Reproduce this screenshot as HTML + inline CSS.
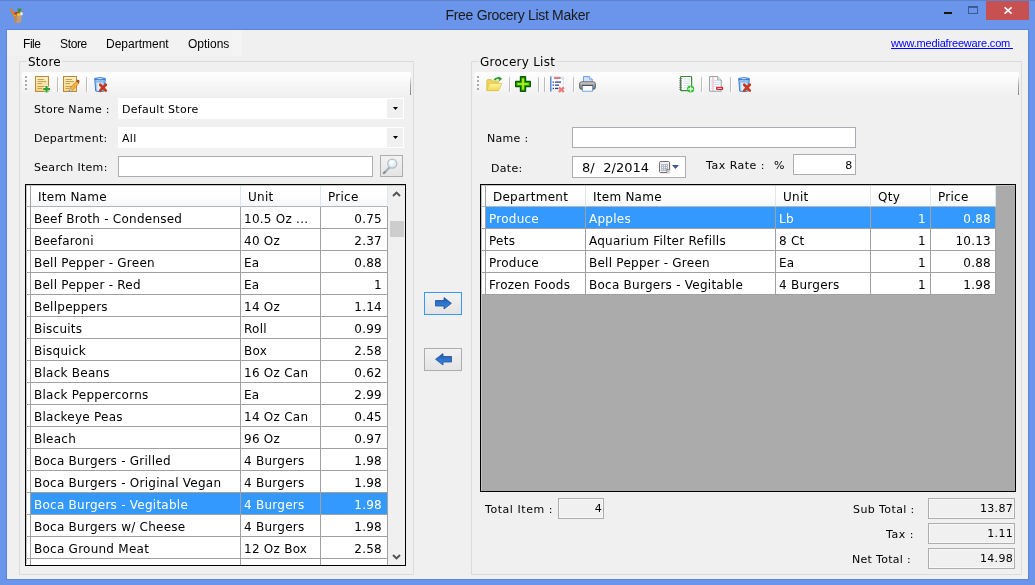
<!DOCTYPE html>
<html>
<head>
<meta charset="utf-8">
<title>Free Grocery List Maker</title>
<style>
html,body{margin:0;padding:0;}
body{width:1035px;height:585px;overflow:hidden;background:#6A95EB;position:relative;will-change:transform;
  font-family:"DejaVu Sans","Liberation Sans",sans-serif;font-size:11px;color:#000;}
div,span,svg,a{position:absolute;box-sizing:border-box;}
.v11{font-family:"DejaVu Sans","Liberation Sans",sans-serif;font-size:11px;letter-spacing:0.3px;white-space:pre;line-height:16px;}
.v12{font-family:"DejaVu Sans","Liberation Sans",sans-serif;font-size:12px;letter-spacing:0.25px;white-space:pre;line-height:15px;}
.seg{font-family:"Liberation Sans",sans-serif;white-space:pre;}
.row{left:0;height:22px;}
.cell{top:0;height:22px;line-height:25px;border-right:1px solid #A0A0A0;border-bottom:1px solid #A0A0A0;padding-left:3px;overflow:hidden;background:#fff;
  font-family:"DejaVu Sans","Liberation Sans",sans-serif;font-size:12px;letter-spacing:0.25px;white-space:pre;}
.cell.r{text-align:right;padding-right:5px;padding-left:0;}
.rg .cell.r{padding-right:4px;}
.sel .cell{background:#3399FF;color:#fff;}
.hdr .cell{background:linear-gradient(#FFFFFF 45%,#F6F7F9);border-right:1px solid #DCE6F2;border-bottom:1px solid #A0A0A0;padding-left:7px;height:22px;line-height:25px;border-bottom-color:#B0B6BC;}
.tb{background:linear-gradient(#FFFFFF,#FAFAFA 35%,#F4F4F4 70%,#F0F0F0);border-radius:3px 2px 0 0;}
.ro{background:#F0F0F0;border:1px solid #ADADAD;text-align:right;padding-right:1px;box-shadow:inset 0 0 0 1px #F8F8F8;}
.inp{background:#fff;border:1px solid #ABADB3;}
.grp{border:1px solid #DCDCDC;}
.glab{background:#F0F0F0;padding:0 1px;}
.sep{width:1px;background:#BDBDBD;}
.sep2{width:1px;background:#fff;}
</style>
</head>
<body>
<svg style="left:0;top:0" width="0" height="0"><defs><linearGradient id="gdoc" x1="0" y1="0" x2="0" y2="1"><stop offset="0" stop-color="#FEF3C8"/><stop offset="1" stop-color="#F3D382"/></linearGradient><linearGradient id="gglass" x1="0" y1="0" x2="1" y2="0"><stop offset="0" stop-color="#5C9CE4"/><stop offset="0.3" stop-color="#E4F2FF"/><stop offset="0.7" stop-color="#CFE6FB"/><stop offset="1" stop-color="#4A8CDC"/></linearGradient><linearGradient id="garr" x1="0" y1="0" x2="0" y2="1"><stop offset="0" stop-color="#1A56A8"/><stop offset="0.5" stop-color="#2F74CC"/><stop offset="1" stop-color="#3E86DC"/></linearGradient><linearGradient id="gfold" x1="0" y1="0" x2="0" y2="1"><stop offset="0" stop-color="#FFF6A0"/><stop offset="1" stop-color="#F0D84E"/></linearGradient><linearGradient id="gprn" x1="0" y1="0" x2="0" y2="1"><stop offset="0" stop-color="#D8D8D8"/><stop offset="0.5" stop-color="#9A9A9A"/><stop offset="1" stop-color="#6E6E6E"/></linearGradient><radialGradient id="glens" cx="0.4" cy="0.35" r="0.7"><stop offset="0" stop-color="#FFFFFF"/><stop offset="1" stop-color="#CFE6F6"/></radialGradient></defs></svg>
<div style="left:0;top:0;width:1035px;height:1px;background:#5C82CE"></div>
<svg style="left:10px;top:7.6px" width="14" height="16" viewBox="0 0 14 16"><path d="M3.6 7.6L12 7.2L11 14.6L4.6 15.2Z" fill="#C39C7A"/><path d="M4 8L7 8L6.5 15L4.6 15.2Z" fill="#B48A66"/><path d="M1 1.5L4.8 8" stroke="#E0801C" stroke-width="2.2" stroke-linecap="round"/><ellipse cx="6.6" cy="5.6" rx="2.3" ry="1.8" fill="#B8401E"/><path d="M7.6 0.6L12 0.8L10.5 3L9.6 5.4L8 4Z" fill="#3F8F28"/><path d="M10.4 4.4L12.6 3.6L12.6 7L10.2 7.4Z" fill="#F4F0E6"/><rect x="11.8" y="3" width="1.2" height="1.2" fill="#E0503A"/><ellipse cx="8.6" cy="6.6" rx="1.8" ry="1.4" fill="#F0CC28"/><ellipse cx="5" cy="7.4" rx="1.4" ry="0.9" fill="#F09A1E"/></svg>
<div class="seg" id="title" style="left:0;top:6px;width:1035px;text-align:center;font-size:14px;letter-spacing:-0.3px;color:#1a1a1a;line-height:18px;">Free Grocery List Maker</div>
<div style="left:944px;top:11.7px;width:8px;height:2.5px;background:#1A1410"></div>
<div style="left:968px;top:6px;width:10px;height:8px;border:1px solid #3D5A94;border-top-width:2px"></div>
<div style="left:986px;top:1px;width:43px;height:19px;background:#C75050"></div>
<svg style="left:1003px;top:6px" width="10" height="9" viewBox="0 0 10 9"><path d="M1.6 1.4L8.6 7.6M8.6 1.4L1.6 7.6" stroke="#fff" stroke-width="1.6" fill="none"/></svg>
<div id="client" style="left:7px;top:30px;width:1021px;height:549px;background:#F0F0F0;box-shadow:0 0 0 1px rgba(70,110,205,0.45)"></div>
<div style="left:7px;top:30px;width:235px;height:26px;background:#F2F2F2"></div>
<div style="left:232px;top:30px;width:10px;height:26px;background:#F4F4F4"></div>
<div class="seg" style="left:23px;top:37px;font-size:12px;line-height:15px;letter-spacing:-0.45px">File</div>
<div class="seg" style="left:60px;top:37px;font-size:12px;line-height:15px;letter-spacing:-0.35px">Store</div>
<div class="seg" style="left:106px;top:37px;font-size:12px;line-height:15px;letter-spacing:0px">Department</div>
<div class="seg" style="left:188px;top:37px;font-size:12px;line-height:15px;letter-spacing:0px">Options</div>
<a class="seg" style="left:891px;top:36px;font-size:11px;line-height:14px;letter-spacing:-0.18px;color:#0000FF;text-decoration:underline;">www.mediafreeware.com </a>
<div class="grp" style="left:19px;top:61px;width:395px;height:514px"></div>
<div class="glab v12" style="left:27px;top:55px;">Store</div>
<div class="tb" style="left:22px;top:72px;width:389px;height:24px"></div>
<div style="left:410px;top:76px;width:1px;height:19px;background:linear-gradient(rgba(150,150,150,0),#A8A8A8 45%,#868686)"></div>
<div style="left:25px;top:76px;width:2px;height:2px;background:#A8A8A8"></div><div style="left:26px;top:77px;width:1px;height:1px;background:#B0B0B0"></div><div style="left:25px;top:80px;width:2px;height:2px;background:#A8A8A8"></div><div style="left:26px;top:81px;width:1px;height:1px;background:#B0B0B0"></div><div style="left:25px;top:84px;width:2px;height:2px;background:#A8A8A8"></div><div style="left:26px;top:85px;width:1px;height:1px;background:#B0B0B0"></div><div style="left:25px;top:88px;width:2px;height:2px;background:#A8A8A8"></div><div style="left:26px;top:89px;width:1px;height:1px;background:#B0B0B0"></div>
<svg style="left:35px;top:76px" width="16" height="17" viewBox="0 0 16 17"><rect x="0.5" y="0.5" width="13" height="15" fill="url(#gdoc)" stroke="#B98A3E"/><path d="M2.5 3.5H9M2.5 5.5H11M2.5 7.5H7M2.5 10.5H11M2.5 12.5H7" stroke="#C9A050" stroke-width="1"/><path d="M11.5 9.5V16.5M8 13H15" stroke="#fff" stroke-width="3.6" opacity="0.9"/><path d="M11.5 10V16.5M8.2 13.2H15" stroke="#2EA22E" stroke-width="2.2"/></svg>
<div class="sep" style="left:57px;top:77px;height:15px"></div><div class="sep2" style="left:58px;top:77px;height:15px"></div>
<svg style="left:63px;top:76px" width="17" height="17" viewBox="0 0 17 17"><rect x="0.5" y="0.5" width="13" height="15" fill="url(#gdoc)" stroke="#B98A3E"/><path d="M2.5 3.5H9M2.5 5.5H11M2.5 7.5H7M2.5 10.5H11M2.5 12.5H6" stroke="#C9A050" stroke-width="1"/><path d="M13.2 5.2L15.8 7.4L9.4 14.6L6.6 12.6Z" fill="#F2B445" stroke="#C07818" stroke-width="0.6"/><path d="M13.2 5.2L14.4 3.8Q15.4 3.4 16.4 4.6Q16.8 5.8 15.8 7.4Z" fill="#A8521C"/><path d="M6.6 12.6L9.4 14.6L5.6 15.6Z" fill="#F2F2F2" stroke="#9A9A9A" stroke-width="0.5"/><path d="M5.6 15.6L6.4 14.2L7.4 15Z" fill="#3A3A3A"/></svg>
<div class="sep" style="left:86px;top:77px;height:15px"></div><div class="sep2" style="left:87px;top:77px;height:15px"></div>
<svg style="left:94px;top:77px" width="14" height="16" viewBox="0 0 14 16"><path d="M0.7 1.4Q6 -0.2 11.3 1.4L10.3 14Q6 15.4 1.7 14Z" fill="url(#gglass)" stroke="#3F7FD0" stroke-width="1"/><path d="M0.8 2.2Q6 3.6 11.2 2.2" stroke="#3F7FD0" stroke-width="1.3" fill="none"/><path d="M1.2 4.2Q6 5.6 10.8 4.2" stroke="#8CBCEC" stroke-width="1.6" fill="none"/><path d="M6.2 7.8L11.8 13.6M11.8 7.8L6.2 13.6" stroke="#C8381C" stroke-width="2.7" stroke-linecap="round"/></svg>
<div class="v11" style="left:34px;top:102px;">Store Name :</div>
<div class="v11" style="left:34px;top:131px;">Department:</div>
<div class="v11" style="left:34px;top:160px;">Search Item:</div>
<div style="left:118px;top:98px;width:286px;height:21px;background:#fff"></div>
<div style="left:387px;top:99px;width:16px;height:19px;background:#F0F0F0"></div>
<svg style="left:393px;top:107px" width="5" height="3" viewBox="0 0 5 3"><path d="M0 0H5L2.5 3Z" fill="#000"/></svg>
<div class="v11" style="left:122px;top:102px;">Default Store</div>
<div style="left:118px;top:127px;width:286px;height:21px;background:#fff"></div>
<div style="left:387px;top:128px;width:16px;height:19px;background:#F0F0F0"></div>
<svg style="left:393px;top:136px" width="5" height="3" viewBox="0 0 5 3"><path d="M0 0H5L2.5 3Z" fill="#000"/></svg>
<div class="v11" style="left:122px;top:131px;">All</div>
<div class="inp" style="left:118px;top:156px;width:255px;height:21px"></div>
<div style="left:380px;top:155px;width:23px;height:22px;background:linear-gradient(#F2F2F2,#E4E4E4);border:1px solid #ADADAD"></div>
<svg style="left:382px;top:157px" width="17" height="17" viewBox="0 0 17 17"><path d="M7.4 10.6L2 16" stroke="#A8B0BA" stroke-width="2.2" stroke-linecap="round"/><path d="M3 15.2L1.8 16.2" stroke="#8A94A0" stroke-width="2.2" stroke-linecap="round"/><circle cx="10.3" cy="6.6" r="4.5" fill="url(#glens)" stroke="#B4BCC6" stroke-width="1.3"/></svg>
<div style="left:25px;top:184px;width:381px;height:382px;background:#fff;border:1px solid #000;overflow:hidden">
<div class="row hdr" style="top:0px;width:379px;height:22px">
<div class="cell" style="left:1px;width:4px;padding:0;border-right-color:#A0A0A0"></div>
<div class="cell" style="left:5px;width:210px">Item Name</div>
<div class="cell" style="left:215px;width:80px">Unit</div>
<div class="cell" style="left:295px;width:67px">Price</div>
</div>
<div class="row" style="top:22px;width:379px">
<div class="cell" style="left:1px;width:4px;padding:0;background:#fff"></div>
<div class="cell" style="left:5px;width:210px">Beef Broth - Condensed</div>
<div class="cell" style="left:215px;width:80px">10.5 Oz ...</div>
<div class="cell r" style="left:295px;width:67px">0.75</div>
</div>
<div class="row" style="top:44px;width:379px">
<div class="cell" style="left:1px;width:4px;padding:0;background:#fff"></div>
<div class="cell" style="left:5px;width:210px">Beefaroni</div>
<div class="cell" style="left:215px;width:80px">40 Oz</div>
<div class="cell r" style="left:295px;width:67px">2.37</div>
</div>
<div class="row" style="top:66px;width:379px">
<div class="cell" style="left:1px;width:4px;padding:0;background:#fff"></div>
<div class="cell" style="left:5px;width:210px">Bell Pepper - Green</div>
<div class="cell" style="left:215px;width:80px">Ea</div>
<div class="cell r" style="left:295px;width:67px">0.88</div>
</div>
<div class="row" style="top:88px;width:379px">
<div class="cell" style="left:1px;width:4px;padding:0;background:#fff"></div>
<div class="cell" style="left:5px;width:210px">Bell Pepper - Red</div>
<div class="cell" style="left:215px;width:80px">Ea</div>
<div class="cell r" style="left:295px;width:67px">1</div>
</div>
<div class="row" style="top:110px;width:379px">
<div class="cell" style="left:1px;width:4px;padding:0;background:#fff"></div>
<div class="cell" style="left:5px;width:210px">Bellpeppers</div>
<div class="cell" style="left:215px;width:80px">14 Oz</div>
<div class="cell r" style="left:295px;width:67px">1.14</div>
</div>
<div class="row" style="top:132px;width:379px">
<div class="cell" style="left:1px;width:4px;padding:0;background:#fff"></div>
<div class="cell" style="left:5px;width:210px">Biscuits</div>
<div class="cell" style="left:215px;width:80px">Roll</div>
<div class="cell r" style="left:295px;width:67px">0.99</div>
</div>
<div class="row" style="top:154px;width:379px">
<div class="cell" style="left:1px;width:4px;padding:0;background:#fff"></div>
<div class="cell" style="left:5px;width:210px">Bisquick</div>
<div class="cell" style="left:215px;width:80px">Box</div>
<div class="cell r" style="left:295px;width:67px">2.58</div>
</div>
<div class="row" style="top:176px;width:379px">
<div class="cell" style="left:1px;width:4px;padding:0;background:#fff"></div>
<div class="cell" style="left:5px;width:210px">Black Beans</div>
<div class="cell" style="left:215px;width:80px">16 Oz Can</div>
<div class="cell r" style="left:295px;width:67px">0.62</div>
</div>
<div class="row" style="top:198px;width:379px">
<div class="cell" style="left:1px;width:4px;padding:0;background:#fff"></div>
<div class="cell" style="left:5px;width:210px">Black Peppercorns</div>
<div class="cell" style="left:215px;width:80px">Ea</div>
<div class="cell r" style="left:295px;width:67px">2.99</div>
</div>
<div class="row" style="top:220px;width:379px">
<div class="cell" style="left:1px;width:4px;padding:0;background:#fff"></div>
<div class="cell" style="left:5px;width:210px">Blackeye Peas</div>
<div class="cell" style="left:215px;width:80px">14 Oz Can</div>
<div class="cell r" style="left:295px;width:67px">0.45</div>
</div>
<div class="row" style="top:242px;width:379px">
<div class="cell" style="left:1px;width:4px;padding:0;background:#fff"></div>
<div class="cell" style="left:5px;width:210px">Bleach</div>
<div class="cell" style="left:215px;width:80px">96 Oz</div>
<div class="cell r" style="left:295px;width:67px">0.97</div>
</div>
<div class="row" style="top:264px;width:379px">
<div class="cell" style="left:1px;width:4px;padding:0;background:#fff"></div>
<div class="cell" style="left:5px;width:210px">Boca Burgers - Grilled</div>
<div class="cell" style="left:215px;width:80px">4 Burgers</div>
<div class="cell r" style="left:295px;width:67px">1.98</div>
</div>
<div class="row" style="top:286px;width:379px">
<div class="cell" style="left:1px;width:4px;padding:0;background:#fff"></div>
<div class="cell" style="left:5px;width:210px">Boca Burgers - Original Vegan</div>
<div class="cell" style="left:215px;width:80px">4 Burgers</div>
<div class="cell r" style="left:295px;width:67px">1.98</div>
</div>
<div class="row sel" style="top:308px;width:379px">
<div class="cell" style="left:1px;width:4px;padding:0;background:#fff"></div>
<div class="cell" style="left:5px;width:210px">Boca Burgers - Vegitable</div>
<div class="cell" style="left:215px;width:80px">4 Burgers</div>
<div class="cell r" style="left:295px;width:67px">1.98</div>
</div>
<div class="row" style="top:330px;width:379px">
<div class="cell" style="left:1px;width:4px;padding:0;background:#fff"></div>
<div class="cell" style="left:5px;width:210px">Boca Burgers w/ Cheese</div>
<div class="cell" style="left:215px;width:80px">4 Burgers</div>
<div class="cell r" style="left:295px;width:67px">1.98</div>
</div>
<div class="row" style="top:352px;width:379px">
<div class="cell" style="left:1px;width:4px;padding:0;background:#fff"></div>
<div class="cell" style="left:5px;width:210px">Boca Ground Meat</div>
<div class="cell" style="left:215px;width:80px">12 Oz Box</div>
<div class="cell r" style="left:295px;width:67px">2.58</div>
</div>
<div class="row" style="top:374px;width:379px">
<div class="cell" style="left:1px;width:4px;padding:0;background:#fff"></div>
<div class="cell" style="left:5px;width:210px"></div>
<div class="cell" style="left:215px;width:80px"></div>
<div class="cell r" style="left:295px;width:67px"></div>
</div>
<div style="left:362px;top:0px;width:17px;height:380px;background:#F0F0F0"></div>
<div style="left:364px;top:36px;width:14px;height:16px;background:#CDCDCD"></div>
<svg style="left:366px;top:6px" width="9" height="6" viewBox="0 0 9 6"><path d="M1 5L4.5 1.5L8 5" stroke="#505050" stroke-width="1.9" fill="none"/></svg>
<svg style="left:366px;top:369px" width="9" height="6" viewBox="0 0 9 6"><path d="M1 1L4.5 4.5L8 1" stroke="#505050" stroke-width="1.9" fill="none"/></svg>
<div style="left:0;top:0;width:379px;height:1px;background:#C4C4C4"></div><div style="left:0;top:0;width:1px;height:379px;background:#C4C4C4"></div>
</div>
<div style="left:424px;top:292px;width:38px;height:23px;background:linear-gradient(#F2F2F2,#E4E4E4);border:1px solid #3399FF"></div>
<svg style="left:435px;top:297px" width="17" height="13" viewBox="0 0 17 13"><path d="M0.5 3.5H9V0.6L16.4 6.3L9 12V9H0.5Z" fill="url(#garr)" stroke="#1C4F98" stroke-width="0.8" stroke-linejoin="round"/></svg>
<div style="left:424px;top:348px;width:38px;height:23px;background:linear-gradient(#F2F2F2,#E4E4E4);border:1px solid #ADADAD"></div>
<svg style="left:435px;top:353px" width="17" height="13" viewBox="0 0 17 13"><path d="M16.5 3.5H8V0.6L0.6 6.3L8 12V9H16.5Z" fill="url(#garr)" stroke="#1C4F98" stroke-width="0.8" stroke-linejoin="round"/></svg>
<div class="grp" style="left:471px;top:61px;width:551px;height:514px"></div>
<div class="glab v12" style="left:479px;top:55px;">Grocery List</div>
<div class="tb" style="left:474px;top:72px;width:545px;height:24px"></div>
<div style="left:1018px;top:76px;width:1px;height:19px;background:linear-gradient(rgba(150,150,150,0),#A8A8A8 45%,#868686)"></div>
<div style="left:477px;top:76px;width:2px;height:2px;background:#A8A8A8"></div><div style="left:478px;top:77px;width:1px;height:1px;background:#B0B0B0"></div><div style="left:477px;top:80px;width:2px;height:2px;background:#A8A8A8"></div><div style="left:478px;top:81px;width:1px;height:1px;background:#B0B0B0"></div><div style="left:477px;top:84px;width:2px;height:2px;background:#A8A8A8"></div><div style="left:478px;top:85px;width:1px;height:1px;background:#B0B0B0"></div><div style="left:477px;top:88px;width:2px;height:2px;background:#A8A8A8"></div><div style="left:478px;top:89px;width:1px;height:1px;background:#B0B0B0"></div>
<svg style="left:486px;top:76px" width="17" height="16" viewBox="0 0 17 16"><path d="M0.8 4.6Q0.8 3.6 1.8 3.6H5.4L6.8 5H11.6Q12.4 5 12.4 6V14.4H0.8Z" fill="#EFD55A" stroke="#D8B83A" stroke-width="0.7"/><path d="M0.8 14.6L3.6 7.4H15.8L12.6 14.6Z" fill="url(#gfold)" stroke="#DCC048" stroke-width="0.7"/><path d="M8.4 4.2Q9.6 1.4 13.2 2.2" stroke="#2F9A2F" stroke-width="1.7" fill="none"/><path d="M12.6 0.2L16.2 2.8L12.8 5.4Z" fill="#2F9A2F"/></svg>
<div class="sep" style="left:509px;top:77px;height:15px"></div><div class="sep2" style="left:510px;top:77px;height:15px"></div>
<svg style="left:515px;top:76px" width="16" height="16" viewBox="0 0 16 16"><path d="M5.5 0.7H10.5V5.5H15.3V10.5H10.5V15.3H5.5V10.5H0.7V5.5H5.5Z" fill="#2DB400" stroke="#0A5C0A" stroke-width="1.4" stroke-linejoin="round"/><path d="M8 2.4V13.6M2.4 8H13.6" stroke="#C8F020" stroke-width="1.6"/></svg>
<div class="sep" style="left:538px;top:77px;height:15px"></div><div class="sep2" style="left:539px;top:77px;height:15px"></div>
<div class="sep" style="left:544px;top:77px;height:15px"></div><div class="sep2" style="left:545px;top:77px;height:15px"></div>
<svg style="left:550px;top:76px" width="15" height="17" viewBox="0 0 15 17"><path d="M0.5 0.5H10L13.5 3V13.5H0.5Z" fill="#fff" stroke="#DDE6F2" stroke-width="1"/><path d="M0.8 0.5V15.5" stroke="#4C86D4" stroke-width="1.4"/><path d="M4 2H10.6" stroke="#D0202C" stroke-width="1.2"/><circle cx="12.6" cy="2.2" r="1.2" fill="#fff" stroke="#B8C4D4" stroke-width="0.7"/><path d="M2.6 6.2H4M5 6.2H11M2.6 9.2H4M5 9.2H9M2.6 12.4H4M5 12.4H8" stroke="#2A3A86" stroke-width="1.3"/><path d="M8.8 11.4L13.8 16M13.8 11.4L8.8 16" stroke="#EE7A74" stroke-width="2.3"/></svg>
<div class="sep" style="left:573px;top:77px;height:15px"></div><div class="sep2" style="left:574px;top:77px;height:15px"></div>
<svg style="left:579px;top:76px" width="17" height="16" viewBox="0 0 17 16"><path d="M4.5 0.6H10.4L13.2 3.2V8H4.5Z" fill="#CFE2FA" stroke="#5A92E2" stroke-width="0.9"/><path d="M10.4 0.6V3.2H13.2" fill="#EEF5FE" stroke="#5A92E2" stroke-width="0.7"/><rect x="0.6" y="5.8" width="15.8" height="7.6" rx="2.2" fill="url(#gprn)" stroke="#5C5C5C" stroke-width="0.9"/><rect x="3.4" y="9.6" width="10.2" height="5.6" fill="#FAFAFA" stroke="#5A92E2" stroke-width="0.8"/><path d="M3 9.4H14" stroke="#4A4A4A" stroke-width="1"/></svg>
<svg style="left:679px;top:76px" width="16" height="17" viewBox="0 0 16 17"><rect x="1.6" y="0.5" width="11" height="14.2" rx="0.8" fill="#fff" stroke="#3C8C3C" stroke-width="1.2"/><path d="M4.5 3H11M4.5 5.2H11M4.5 7.4H11M4.5 9.6H11M4.5 11.8H8" stroke="#CFDCF4" stroke-width="0.9"/><path d="M0.2 2.6H3M0.2 4.8H3M0.2 7H3M0.2 9.2H3M0.2 11.4H3M0.2 13.4H3" stroke="#6E6E6E" stroke-width="0.9"/><circle cx="11.6" cy="13" r="3.6" fill="#36C036"/><path d="M11.6 10.6V15.4M9.2 13H14" stroke="#E8FFE0" stroke-width="1.3"/></svg>
<div class="sep" style="left:701px;top:77px;height:15px"></div><div class="sep2" style="left:702px;top:77px;height:15px"></div>
<svg style="left:709px;top:76px" width="15" height="17" viewBox="0 0 15 17"><path d="M0.6 0.6H8.6L12.2 4V15.2H0.6Z" fill="#fff" stroke="#8C9C9C" stroke-width="1"/><path d="M8.6 0.6V4H12.2" fill="#E8EEF0" stroke="#8C9C9C" stroke-width="0.8"/><path d="M5 4.4H11M5 6.4H11M5 8.4H11M5 10.4H8M2 4.4H3.2M2 6.4H3.2M2 8.4H3.2M2 10.4H3.2M2 12.4H3.2" stroke="#CBD6F2" stroke-width="0.9"/><path d="M4 1V15" stroke="#F0A0A8" stroke-width="1"/><rect x="7" y="10.8" width="7.2" height="3.2" rx="1.1" fill="#D42838"/><path d="M8.4 12.4H12.8" stroke="#FFE0E0" stroke-width="0.9"/></svg>
<div class="sep" style="left:730px;top:77px;height:15px"></div><div class="sep2" style="left:731px;top:77px;height:15px"></div>
<svg style="left:738px;top:77px" width="14" height="16" viewBox="0 0 14 16"><path d="M0.7 1.4Q6 -0.2 11.3 1.4L10.3 14Q6 15.4 1.7 14Z" fill="url(#gglass)" stroke="#3F7FD0" stroke-width="1"/><path d="M0.8 2.2Q6 3.6 11.2 2.2" stroke="#3F7FD0" stroke-width="1.3" fill="none"/><path d="M1.2 4.2Q6 5.6 10.8 4.2" stroke="#8CBCEC" stroke-width="1.6" fill="none"/><path d="M6.2 7.8L11.8 13.6M11.8 7.8L6.2 13.6" stroke="#C8381C" stroke-width="2.7" stroke-linecap="round"/></svg>
<div class="v11" style="left:487px;top:131px;">Name :</div>
<div class="inp" style="left:572px;top:127px;width:284px;height:21px"></div>
<div class="v11" style="left:491px;top:161px;">Date:</div>
<div class="inp" style="left:572px;top:156px;width:114px;height:22px"></div>
<div class="v12" style="left:582px;top:160px;font-size:13px;letter-spacing:0;word-spacing:4.5px;line-height:16px">8/ 2/2014</div>
<svg style="left:659px;top:161px" width="12" height="13" viewBox="0 0 12 13"><rect x="2" y="2" width="9.5" height="10.5" rx="1" fill="#C8C8C8" opacity="0.6"/><path d="M1.5 0.5H9.5Q10.5 0.5 10.5 1.5V8.5L8 11.5H1.5Q0.5 11.5 0.5 10.5V1.5Q0.5 0.5 1.5 0.5Z" fill="#EDF2FA" stroke="#7A6A68"/><rect x="2" y="3" width="7" height="7" fill="#B2B8C6"/><path d="M3 4.5H4M5 4.5H6M7 4.5H8M3 6.5H4M5 6.5H6M7 6.5H8M3 8.5H4M5 8.5H6" stroke="#F4F6FA" stroke-width="1"/><path d="M10.5 8.5H8V11.5" fill="#fff" stroke="#7A6A68" stroke-width="0.8"/></svg>
<svg style="left:672px;top:165px" width="7" height="4" viewBox="0 0 7 4"><path d="M0 0H7L3.5 4Z" fill="#3E5A8E"/></svg>
<div class="v11" style="left:706px;top:158px;letter-spacing:0.5px">Tax Rate :</div>
<div class="v11" style="left:774px;top:158px;">%</div>
<div class="inp" style="left:793px;top:154px;width:63px;height:21px"></div>
<div class="v11" style="left:793px;top:158px;width:59.5px;text-align:right">8</div>
<div style="left:480px;top:184px;width:536px;height:308px;background:#ABABAB;border:1px solid #000;overflow:hidden" class="rg">
<div style="left:0;top:0;width:515px;height:110px;background:#fff"></div>
<div class="row hdr" style="top:0px;width:533px;height:22px">
<div class="cell" style="left:1px;width:4px;padding:0;border-right-color:#A0A0A0"></div>
<div class="cell" style="left:5px;width:100px">Department</div>
<div class="cell" style="left:105px;width:190px">Item Name</div>
<div class="cell" style="left:295px;width:95px">Unit</div>
<div class="cell" style="left:390px;width:60px">Qty</div>
<div class="cell" style="left:450px;width:65px">Price</div>
</div>
<div class="row sel" style="top:22px;width:533px">
<div class="cell" style="left:1px;width:4px;padding:0;background:#fff"></div>
<div class="cell" style="left:5px;width:100px">Produce</div>
<div class="cell" style="left:105px;width:190px">Apples</div>
<div class="cell" style="left:295px;width:95px">Lb</div>
<div class="cell r" style="left:390px;width:60px">1</div>
<div class="cell r" style="left:450px;width:65px">0.88</div>
</div>
<div class="row" style="top:44px;width:533px">
<div class="cell" style="left:1px;width:4px;padding:0;background:#fff"></div>
<div class="cell" style="left:5px;width:100px">Pets</div>
<div class="cell" style="left:105px;width:190px">Aquarium Filter Refills</div>
<div class="cell" style="left:295px;width:95px">8 Ct</div>
<div class="cell r" style="left:390px;width:60px">1</div>
<div class="cell r" style="left:450px;width:65px">10.13</div>
</div>
<div class="row" style="top:66px;width:533px">
<div class="cell" style="left:1px;width:4px;padding:0;background:#fff"></div>
<div class="cell" style="left:5px;width:100px">Produce</div>
<div class="cell" style="left:105px;width:190px">Bell Pepper - Green</div>
<div class="cell" style="left:295px;width:95px">Ea</div>
<div class="cell r" style="left:390px;width:60px">1</div>
<div class="cell r" style="left:450px;width:65px">0.88</div>
</div>
<div class="row" style="top:88px;width:533px">
<div class="cell" style="left:1px;width:4px;padding:0;background:#fff"></div>
<div class="cell" style="left:5px;width:100px">Frozen Foods</div>
<div class="cell" style="left:105px;width:190px">Boca Burgers - Vegitable</div>
<div class="cell" style="left:295px;width:95px">4 Burgers</div>
<div class="cell r" style="left:390px;width:60px">1</div>
<div class="cell r" style="left:450px;width:65px">1.98</div>
</div>
<div style="left:0;top:0;width:534px;height:1px;background:#C4C4C4"></div><div style="left:0;top:0;width:1px;height:306px;background:#C4C4C4"></div>
</div>
<div class="v11" style="left:485px;top:502px;letter-spacing:0.55px">Total Item :</div>
<div class="ro v11" style="left:558px;top:498px;width:46px;height:21px;line-height:19px">4</div>
<div class="v11" style="left:853px;top:502px;letter-spacing:0.4px">Sub Total :</div>
<div class="v11" style="left:886px;top:527px;letter-spacing:0.55px">Tax :</div>
<div class="v11" style="left:852px;top:552px;letter-spacing:0.3px">Net Total :</div>
<div class="ro v11" style="left:928px;top:498px;width:87px;height:21px;line-height:19px">13.87</div>
<div class="ro v11" style="left:928px;top:523px;width:87px;height:21px;line-height:19px">1.11</div>
<div class="ro v11" style="left:928px;top:548px;width:87px;height:21px;line-height:19px">14.98</div>
</body>
</html>
